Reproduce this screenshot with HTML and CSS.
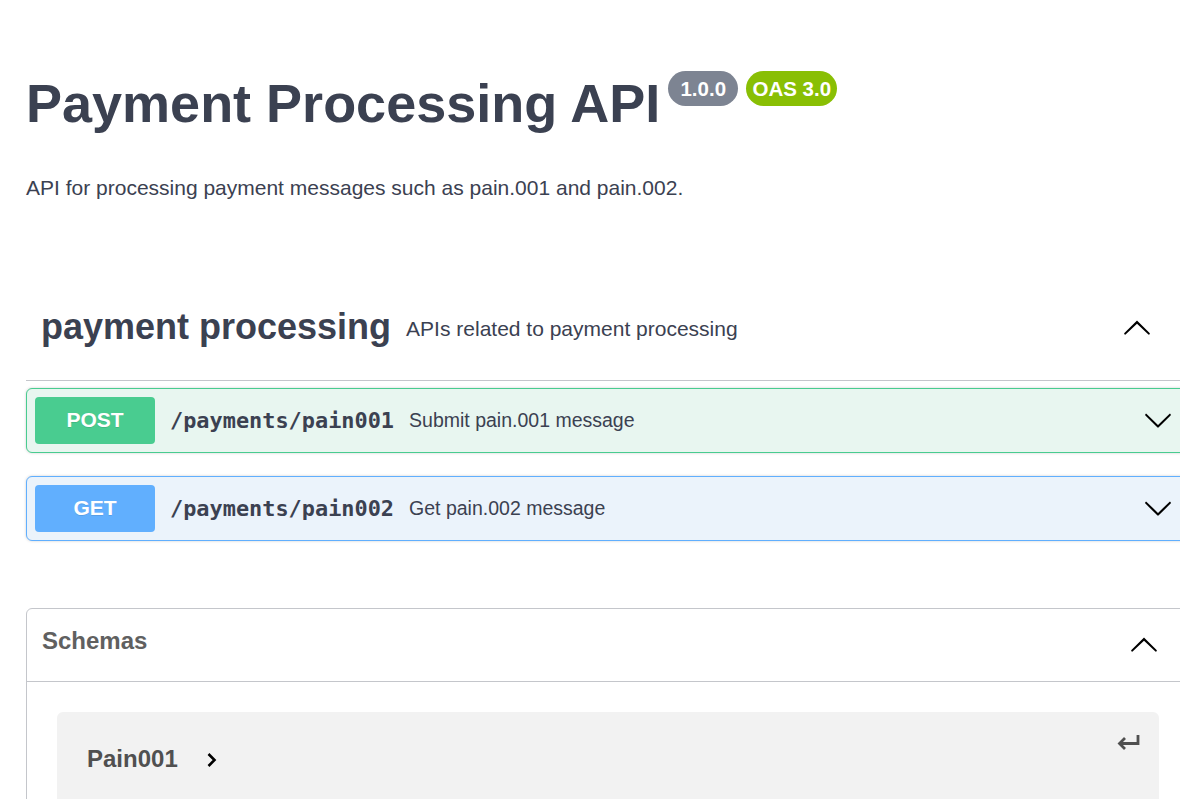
FILE: index.html
```html
<!DOCTYPE html>
<html>
<head>
<meta charset="utf-8">
<link rel="stylesheet" href="styles.css">
</head>
<body>
<div class="wrapper">
  <div class="info">
    <div class="title-row">
      <h2 class="title">Payment Processing API</h2>
      <span class="badge badge-version">1.0.0</span>
      <span class="badge badge-oas">OAS 3.0</span>
    </div>
    <p class="desc">API for processing payment messages such as pain.001 and pain.002.</p>
  </div>

  <div class="tag-section">
    <div class="tag-header">
      <h3 class="tag-name">payment processing</h3>
      <span class="tag-desc">APIs related to payment processing</span>
      <svg class="arrow tag-arrow" viewBox="0 0 20 20" width="30" height="30"><path d="M17.418 14.908c.272.268.709.268.979 0s.271-.701 0-.969l-7.908-7.83c-.27-.268-.707-.268-.979 0l-7.908 7.830c-.27.268-.27.701 0 .969.271.268.709.268.979 0L10 7.767l7.418 7.141z"/></svg>
    </div>

    <div class="opblock opblock-post">
      <span class="method">POST</span>
      <span class="path">/payments/pain001</span>
      <span class="op-desc">Submit pain.001 message</span>
      <svg class="arrow op-arrow" viewBox="0 0 20 20" width="30" height="30"><path d="M17.418 6.109c.272-.268.709-.268.979 0s.271.701 0 .969l-7.908 7.83c-.27.268-.707.268-.979 0l-7.908-7.83c-.27-.268-.27-.701 0-.969.271-.268.709-.268.979 0L10 13.25l7.418-7.141z"/></svg>
    </div>

    <div class="opblock opblock-get">
      <span class="method">GET</span>
      <span class="path">/payments/pain002</span>
      <span class="op-desc">Get pain.002 message</span>
      <svg class="arrow op-arrow" viewBox="0 0 20 20" width="30" height="30"><path d="M17.418 6.109c.272-.268.709-.268.979 0s.271.701 0 .969l-7.908 7.83c-.27.268-.707.268-.979 0l-7.908-7.83c-.27-.268-.27-.701 0-.969.271-.268.709-.268.979 0L10 13.25l7.418-7.141z"/></svg>
    </div>
  </div>

  <section class="models">
    <div class="models-header">
      <h4 class="models-title">Schemas</h4>
      <svg class="arrow models-arrow" viewBox="0 0 20 20" width="30" height="30"><path d="M17.418 14.908c.272.268.709.268.979 0s.271-.701 0-.969l-7.908-7.83c-.27-.268-.707-.268-.979 0l-7.908 7.83c-.27.268-.27.701 0 .969.271.268.709.268.979 0L10 7.767l7.418 7.141z"/></svg>
    </div>
    <div class="models-body">
      <div class="model-box">
        <span class="model-name">Pain001</span>
        <svg class="model-toggle" viewBox="0 0 12 16" width="12" height="16"><polyline points="2.5,2 8.5,8 2.5,14" fill="none" stroke="#000" stroke-width="2.6"/></svg>
        <svg class="jump-icon" viewBox="0 0 26 18" width="26" height="18"><path d="M22 2 V10.5 H4" fill="none" stroke="#505050" stroke-width="2.8"/><polyline points="9,5 3.5,10.5 9,16" fill="none" stroke="#505050" stroke-width="2.8"/></svg>
      </div>
    </div>
  </section>
</div>
</body>
</html>
```
FILE: styles.css
```css
html, body {
  margin: 0;
  padding: 0;
  overflow: hidden;
  background: #fff;
}
body {
  font-family: "Liberation Sans", Arial, sans-serif;
  color: #3b4151;
}
.wrapper {
  width: 1164px;
  margin-left: 26px;
}
.info {
  padding-top: 72px;
}
.title-row {
  display: flex;
  align-items: flex-start;
}
.title {
  margin: 0;
  font-size: 54px;
  font-weight: 700;
  line-height: 62px;
  color: #3b4151;
}
.badge {
  display: inline-block;
  height: 35px;
  line-height: 35px;
  text-align: center;
  border-radius: 18px;
  color: #fff;
  font-weight: 700;
  font-size: 20.5px;
  margin-top: -1px;
}
.badge-version {
  width: 70px;
  background: #7d8492;
  margin-left: 8px;
}
.badge-oas {
  width: 91px;
  background: #89bf04;
  margin-left: 8px;
}
.desc {
  margin: 42px 0 0;
  font-size: 21px;
  line-height: 24px;
}
.tag-section {
  margin-top: 100px;
}
.tag-header {
  display: flex;
  align-items: center;
  height: 42px;
  padding: 6px 0 32px 15px;
  border-bottom: 1px solid #c4c6cb;
  margin-bottom: 7px;
}
.tag-name {
  margin: 0;
  font-size: 36px;
  font-weight: 700;
  line-height: 42px;
}
.tag-desc {
  font-size: 21px;
  padding-left: 15px;
  flex: 1;
  margin-top: 3px;
}
.arrow {
  flex: none;
  fill: #000;
}
.tag-arrow {
  margin-right: 38px;
}
.opblock {
  display: flex;
  align-items: center;
  padding: 8px;
  border: 1px solid;
  border-radius: 6px;
  box-shadow: 0 0 3px rgba(0, 0, 0, 0.19);
  margin-bottom: 23px;
}
.opblock-post {
  background: #e8f6f0;
  border-color: #49cc90;
}
.opblock-get {
  background: #ebf3fb;
  border-color: #61affe;
}
.method {
  flex: none;
  width: 120px;
  height: 47px;
  line-height: 46px;
  border-radius: 4px;
  text-align: center;
  color: #fff;
  font-weight: 700;
  font-size: 21px;
  text-shadow: 0 1px 0 rgba(0, 0, 0, 0.1);
}
.opblock-post .method { background: #49cc90; }
.opblock-get .method { background: #61affe; }
.path {
  font-family: "DejaVu Sans Mono", monospace;
  font-weight: 700;
  font-size: 21.9px;
  padding: 0 15px;
  color: #3b4151;
}
.op-desc {
  flex: 1;
  font-size: 19.5px;
  color: #3b4151;
}
.op-arrow {
  margin-right: 8px;
  margin-bottom: 2px;
}
.models {
  margin-top: 67px;
  border: 1px solid #c4c6cb;
  border-radius: 6px;
}
.models-header {
  display: flex;
  align-items: center;
  height: 64px;
  padding: 0 30px 8px 15px;
  border-bottom: 1px solid #c4c6cb;
}
.models-title {
  flex: 1;
  margin: 0;
  font-size: 24px;
  font-weight: 700;
  color: #606060;
}
.models-arrow {
  margin-top: 6px;
}
.models-body {
  padding: 30px 30px 0;
}
.model-box {
  display: flex;
  align-items: center;
  height: 120px;
  padding: 0 17px 0 30px;
  background: #f2f2f2;
  border-radius: 6px;
  position: relative;
}
.model-name {
  font-size: 24px;
  font-weight: 700;
  color: #505050;
  align-self: flex-start;
  margin-top: 33px;
}
.model-toggle {
  align-self: flex-start;
  margin: 40px 0 0 28px;
}
.jump-icon {
  position: absolute;
  right: 17px;
  top: 21px;
}
```
